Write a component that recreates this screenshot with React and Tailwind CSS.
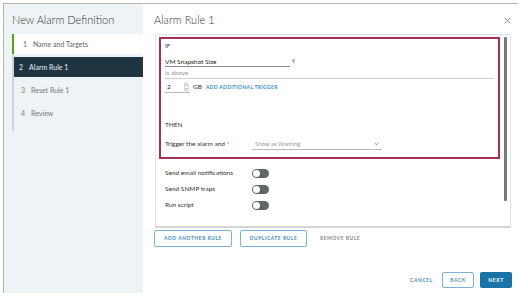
import React from 'react';

const font = { fontFamily: 'Lato, "Open Sans", sans-serif' };

const steps = [
  { n: 1, label: 'Name and Targets', state: 'done' },
  { n: 2, label: 'Alarm Rule 1', state: 'active' },
  { n: 3, label: 'Reset Rule 1', state: 'todo' },
  { n: 4, label: 'Review', state: 'todo' },
];

const Toggle = () => (
  <div className="w-[17px] h-[9px] rounded-full bg-[#5f6466] flex items-center px-[1px]">
    <div className="w-[7px] h-[7px] rounded-full bg-white" />
  </div>
);

const ToggleRow = ({ label }) => (
  <div className="flex items-center h-[16px]">
    <span className="w-[87px] text-[6.5px] text-[#333]">{label}</span>
    <Toggle />
  </div>
);

const App = () => {
  return (
    <div className="w-[528px] h-[297px] bg-white pl-[3px] pt-[3px] leading-none" style={font}>
      <div className="w-[515px] h-[290px] flex border-t border-l border-[#b5b5b5]">
        {/* wizard nav */}
        <div className="w-[139px] bg-[#eef3f6] flex flex-col">
          <div className="h-[30px] pl-[8px] flex items-center text-[11px] text-[#333] font-light">
            New Alarm Definition
          </div>
          <div className="ml-[8px] border-l-2 border-[#cfd3d6] flex flex-col gap-[3px] pb-[8px]">
            {steps.map(s => (
              <div
                key={s.n}
                className={`h-[20px] flex items-center text-[7px] ${
                  s.state === 'done'
                    ? 'bg-white border-l-2 border-[#5aa220] -ml-[2px] pl-[9px] text-[#666]'
                    : s.state === 'active'
                    ? 'bg-[#1f3441] pl-[5px] text-[#e5f1f8]'
                    : 'pl-[7px] text-[#777]'
                }`}
              >
                <span className="mr-[6px]">{s.n}</span>
                {s.label}
              </div>
            ))}
          </div>
        </div>

        {/* main */}
        <div className="flex-1 flex flex-col bg-white">
          <div className="h-[30px] flex items-center justify-between pl-[11px] pr-[7px]">
            <span className="text-[11px] text-[#333] font-light">Alarm Rule 1</span>
            <svg width="7" height="7" viewBox="0 0 10 10" className="mt-[2px]">
              <path d="M1 1L9 9M9 1L1 9" stroke="#888" strokeWidth="1.2" />
            </svg>
          </div>

          <div className="ml-[12px] mr-[7px] h-[194px] border border-[#e3e3e3] border-b-2 border-b-[#d6d6d6] flex">
            <div className="flex-1 pl-[3px] pt-[2px] flex flex-col">
              <div className="h-[122px] border-2 border-[#a8304f] pl-[4px] pr-[2px] pt-[4px] flex flex-col">
                <span className="h-[6px] flex items-center text-[6px] text-[#333]">IF</span>
                <div className="mt-[9px] h-[9px] flex items-end">
                  <div className="w-[125px] h-[9px] border-b border-[#8c8c8c] text-[6.5px] text-[#222] flex items-center">
                    VM Snapshot Size
                  </div>
                  <svg width="5" height="5" viewBox="0 0 10 10" className="ml-[1px] mb-[3px]">
                    <path d="M1 1h8L6 5v4L4 8V5z" fill="#999" />
                  </svg>
                </div>
                <div className="mt-[1px] mr-[2px] h-[11px] border-b border-[#cfcfcf] text-[6.5px] text-[#999] flex items-center">
                  is above
                </div>
                <div className="mt-[3px] h-[11px] flex items-center">
                  <div className="w-[25px] h-[11px] border-b border-[#bbb] flex items-center justify-between pl-[2px] pr-[1px] text-[6.5px] text-[#222]">
                    <span>2</span>
                    <svg width="5" height="8" viewBox="0 0 5 8" className="block">
                      <rect x="0.5" y="0.5" width="4" height="7" fill="none" stroke="#bbb" strokeWidth="0.6" />
                      <path d="M1.3 3L2.5 1.6L3.7 3M1.3 5L2.5 6.4L3.7 5" fill="none" stroke="#777" strokeWidth="0.6" />
                    </svg>
                  </div>
                  <span className="ml-[3px] text-[6.5px] text-[#333]">GB</span>
                  <span className="ml-[4px] text-[5px] font-bold tracking-[0.06em] text-[#3790c7]">
                    ADD ADDITIONAL TRIGGER
                  </span>
                </div>
                <span className="mt-[29px] h-[6px] flex items-center text-[6.5px] text-[#333]">THEN</span>
                <div className="mt-[11px] h-[11px] flex items-center">
                  <span className="w-[87px] text-[6.5px] text-[#333]">
                    Trigger the alarm and <span className="text-[#c92100]">*</span>
                  </span>
                  <div className="w-[130px] h-[11px] border-b border-[#b8b8b8] flex items-center justify-between pl-[3px] pr-[3px] text-[6px] text-[#999]">
                    <span>Show as Warning</span>
                    <svg width="5" height="4" viewBox="0 0 6 4" className="block">
                      <path d="M0.8 0.8L3 3L5.2 0.8" fill="none" stroke="#666" strokeWidth="0.9" />
                    </svg>
                  </div>
                </div>
              </div>
              <div className="mt-[6px] pl-[6px] flex flex-col">
                <ToggleRow label="Send email notifications" />
                <ToggleRow label="Send SNMP traps" />
                <ToggleRow label="Run script" />
              </div>
            </div>
            <div className="w-[10px] pt-[2px] flex justify-center">
              <div className="w-[3px] h-[164px] bg-[#7a7a7a] rounded-[1px]" />
            </div>
          </div>

          <div className="mt-[2px] ml-[11px] flex items-center gap-[8px] h-[17px]">
            <button className="h-[17px] w-[78px] border border-[#7ab3d6] rounded-[2px] text-[5px] font-bold tracking-[0.1em] text-[#3e8cc0]">
              ADD ANOTHER RULE
            </button>
            <button className="h-[17px] w-[67px] border border-[#7ab3d6] rounded-[2px] text-[5px] font-bold tracking-[0.1em] text-[#3e8cc0]">
              DUPLICATE RULE
            </button>
            <button className="h-[17px] ml-[5px] text-[5px] font-bold tracking-[0.1em] text-[#888]">
              REMOVE RULE
            </button>
          </div>

          <div className="mt-auto mb-[5px] mr-[6px] flex items-center justify-end gap-[6px] h-[16px]">
            <button className="h-[16px] px-[1px] mr-[2px] text-[5px] font-bold tracking-[0.12em] text-[#4a8fbd]">
              CANCEL
            </button>
            <button className="h-[16px] w-[32px] border border-[#7ab3d6] rounded-[2px] text-[5px] font-bold tracking-[0.12em] text-[#4a8fbd]">
              BACK
            </button>
            <button className="h-[16px] w-[32px] bg-[#1a74a8] rounded-[2px] text-[5px] font-bold tracking-[0.12em] text-white">
              NEXT
            </button>
          </div>
        </div>
      </div>
    </div>
  );
};

export default App;
